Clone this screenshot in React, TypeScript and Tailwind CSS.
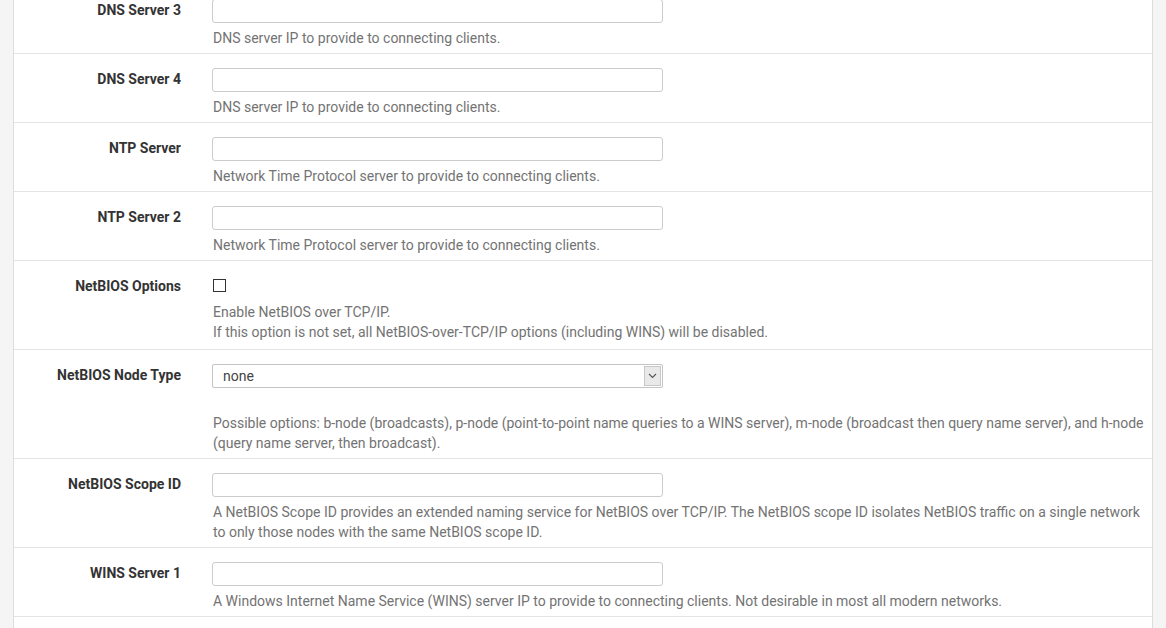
import React from "react";

type Row =
  | { kind: "input"; label: string; help: string[] }
  | { kind: "checkbox"; label: string; help: string[] }
  | { kind: "select"; label: string; value: string; help: string[] };

const rows: Row[] = [
  { kind: "input", label: "DNS Server 3", help: ["DNS server IP to provide to connecting clients."] },
  { kind: "input", label: "DNS Server 4", help: ["DNS server IP to provide to connecting clients."] },
  { kind: "input", label: "NTP Server", help: ["Network Time Protocol server to provide to connecting clients."] },
  { kind: "input", label: "NTP Server 2", help: ["Network Time Protocol server to provide to connecting clients."] },
  {
    kind: "checkbox",
    label: "NetBIOS Options",
    help: [
      "Enable NetBIOS over TCP/IP.",
      "If this option is not set, all NetBIOS-over-TCP/IP options (including WINS) will be disabled.",
    ],
  },
  {
    kind: "select",
    label: "NetBIOS Node Type",
    value: "none",
    help: [
      "Possible options: b-node (broadcasts), p-node (point-to-point name queries to a WINS server), m-node (broadcast then query name server), and h\u2011node (query name server, then broadcast).",
    ],
  },
  {
    kind: "input",
    label: "NetBIOS Scope ID",
    help: [
      "A NetBIOS Scope ID provides an extended naming service for NetBIOS over TCP/IP. The NetBIOS scope ID isolates NetBIOS traffic on a single network to only those nodes with the same NetBIOS scope ID.",
    ],
  },
  {
    kind: "input",
    label: "WINS Server 1",
    help: ["A Windows Internet Name Service (WINS) server IP to provide to connecting clients. Not desirable in most all modern networks."],
  },
  { kind: "input", label: "WINS Server 2", help: ["A Windows Internet Name Service (WINS) server IP to provide to connecting clients."] },
];

function FormRow({ row }: { row: Row }) {
  const pt = row.kind === "checkbox" ? "pt-[15px]" : "pt-[15px]";
  const pb = row.kind === "checkbox" ? "pb-[7px]" : "pb-[5px]";
  return (
    <div className="flex shrink-0 border-b border-[#e4e4e4]">
      <div className={`w-[183px] shrink-0 pr-[16px] text-right font-bold text-[14px] leading-[20px] text-[#333333] ${pt}`}>
        {row.label}
      </div>
      <div className={`flex-1 pl-[15px] pr-[6px] pt-[14px] ${pb}`}>
        {row.kind === "input" && (
          <div className="w-[451px] h-[24px] border border-[#cccccc] rounded-[3px] bg-white" />
        )}
        {row.kind === "checkbox" && (
          <div className="h-[22px] pt-[4px] pl-[1px]">
            <div className="w-[13px] h-[13px] border border-[#333333] bg-white" />
          </div>
        )}
        {row.kind === "select" && (
          <div className="w-[451px] h-[24px] border border-[#c4c4c4] rounded-[2px] bg-white flex items-center">
            <span className="flex-1 pl-[10px] text-[14px] text-[#444444]">{row.value}</span>
            <div className="w-[17px] h-[20px] mr-[1px] bg-[#e9e9e9] border border-[#c8c8c8] flex items-center justify-center">
              <svg width="9" height="6" viewBox="0 0 9 6" fill="none">
                <path d="M1 1 L4.5 4.5 L8 1" stroke="#555" strokeWidth="1.1" />
              </svg>
            </div>
          </div>
        )}
        <div className={`${row.kind === "select" ? "mt-[25px]" : "mt-[5px]"} text-[14px] leading-[20px] text-[#737373] pl-[1px]`}>
          {row.help.map((h, i) => (
            <div key={i}>{h}</div>
          ))}
        </div>
      </div>
    </div>
  );
}

export default function App() {
  return (
    <div
      className="w-[1166px] h-[628px] overflow-hidden bg-[#f5f5f5] px-[13px] flex"
      style={{ fontFamily: "Roboto, 'Liberation Sans', sans-serif" }}
    >
      <div className="flex-1 bg-white border-l border-r border-[#dddddd] flex flex-col overflow-hidden">
        <div className="flex flex-col -mt-[15px]">
          {rows.map((r, i) => (
            <FormRow key={i} row={r} />
          ))}
        </div>
      </div>
    </div>
  );
}
